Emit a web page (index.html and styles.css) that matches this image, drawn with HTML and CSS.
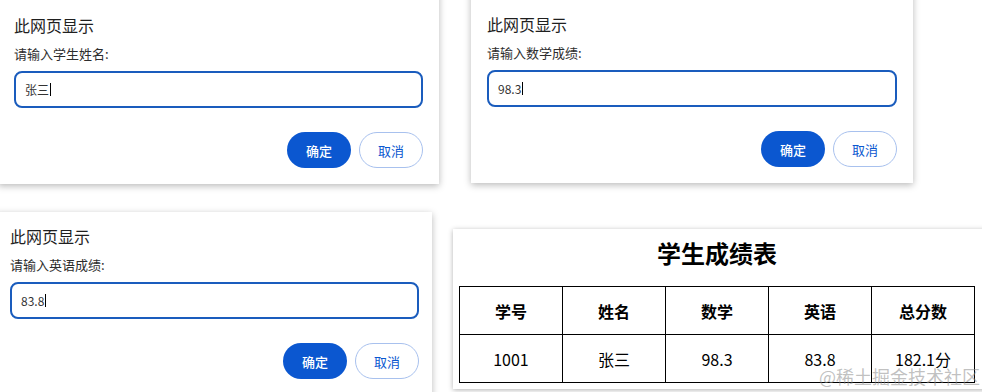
FILE: index.html
```html
<!DOCTYPE html>
<html lang="zh-CN">
<head>
<meta charset="utf-8">
<title>学生成绩</title>
<link rel="stylesheet" href="styles.css">
</head>
<body>
<div class="canvas">
  <div class="dialog d1">
    <div class="dlg-title">此网页显示</div>
    <div class="dlg-label">请输入学生姓名:</div>
    <div class="dlg-input"><span>张三</span><span class="caret"></span></div>
    <div class="dlg-actions">
      <button class="btn btn-ok">确定</button>
      <button class="btn btn-cancel">取消</button>
    </div>
  </div>

  <div class="dialog d2">
    <div class="dlg-title">此网页显示</div>
    <div class="dlg-label">请输入数学成绩:</div>
    <div class="dlg-input"><span>98.3</span><span class="caret"></span></div>
    <div class="dlg-actions">
      <button class="btn btn-ok">确定</button>
      <button class="btn btn-cancel">取消</button>
    </div>
  </div>

  <div class="dialog d3">
    <div class="dlg-title">此网页显示</div>
    <div class="dlg-label">请输入英语成绩:</div>
    <div class="dlg-input"><span>83.8</span><span class="caret"></span></div>
    <div class="dlg-actions">
      <button class="btn btn-ok">确定</button>
      <button class="btn btn-cancel">取消</button>
    </div>
  </div>

  <div class="panel">
    <h2 class="panel-title">学生成绩表</h2>
    <table class="score">
      <tr><th>学号</th><th>姓名</th><th>数学</th><th>英语</th><th>总分数</th></tr>
      <tr><td>1001</td><td>张三</td><td>98.3</td><td>83.8</td><td>182.1分</td></tr>
    </table>
  </div>

  <div class="watermark">@稀土掘金技术社区</div>
</div>
</body>
</html>
```

FILE: styles.css
```css
html, body {
  margin: 0;
  padding: 0;
  background: #ffffff;
}

.canvas {
  position: relative;
  width: 982px;
  height: 392px;
  overflow: hidden;
  background: #ffffff;
  font-family: "Noto Sans CJK SC", "Noto Sans", sans-serif;
}

.dialog {
  position: absolute;
  box-sizing: border-box;
  background: #ffffff;
  box-shadow: 0 2px 7px rgba(0, 0, 0, 0.28);
  padding: 13px 16px 16px 16px;
  display: flex;
  flex-direction: column;
}

.d1 { left: -2px; top: -19px; width: 441px; padding-top: 33px; }
.d2 { left: 471px; top: -20px; width: 442px; padding-top: 33px; }
.d3 { left: -6px; top: 212px; width: 438px; padding-right: 13px; height: 200px; }

.dlg-title {
  font-size: 16px;
  line-height: 22px;
  color: #1f1f1f;
}

.dlg-label {
  margin-top: 9px;
  font-size: 13px;
  line-height: 18px;
  color: #2d2d2d;
}

.dlg-input {
  margin-top: 8px;
  box-sizing: border-box;
  height: 37px;
  border: 2px solid #1a5cbd;
  border-radius: 8px;
  padding: 0 9px;
  display: flex;
  align-items: center;
  font-size: 12px;
  color: #333333;
}

.caret {
  display: inline-block;
  width: 1px;
  height: 13px;
  background: #000000;
  margin-left: 1px;
}

.dlg-actions {
  margin-top: 24px;
  display: flex;
  justify-content: flex-end;
  gap: 8px;
}

.btn {
  box-sizing: border-box;
  width: 64px;
  height: 36px;
  border-radius: 18px;
  font-family: "Noto Sans CJK SC", sans-serif;
  font-size: 13px;
  padding: 0;
}

.btn-ok {
  background: #0b57d0;
  color: #ffffff;
  border: none;
  font-weight: 500;
}

.btn-cancel {
  background: #ffffff;
  color: #0b57d0;
  border: 1px solid #a8c1ee;
}

.panel {
  position: absolute;
  left: 453px;
  top: 229px;
  width: 560px;
  height: 160px;
  box-sizing: border-box;
  background: #ffffff;
  box-shadow: 0 1px 5px rgba(0, 0, 0, 0.3);
  padding: 8px 0 0 6px;
}

.panel-title {
  margin: 0;
  width: 516px;
  text-align: center;
  font-size: 24px;
  line-height: 32px;
  font-weight: 700;
  color: #000000;
}

.score {
  margin-top: 17px;
  width: 516px;
  border-collapse: collapse;
  table-layout: fixed;
  font-size: 16px;
  color: #000000;
}

.score th,
.score td {
  border: 1px solid #000000;
  height: 47px;
  padding: 0;
  text-align: center;
}

.score th { font-weight: 700; }
.score td { font-weight: 400; }

.watermark {
  position: absolute;
  right: 2px;
  bottom: 6px;
  font-size: 18px;
  line-height: 20px;
  color: rgba(140, 140, 140, 0.55);
  font-family: "Noto Sans CJK SC", sans-serif;
}
```
